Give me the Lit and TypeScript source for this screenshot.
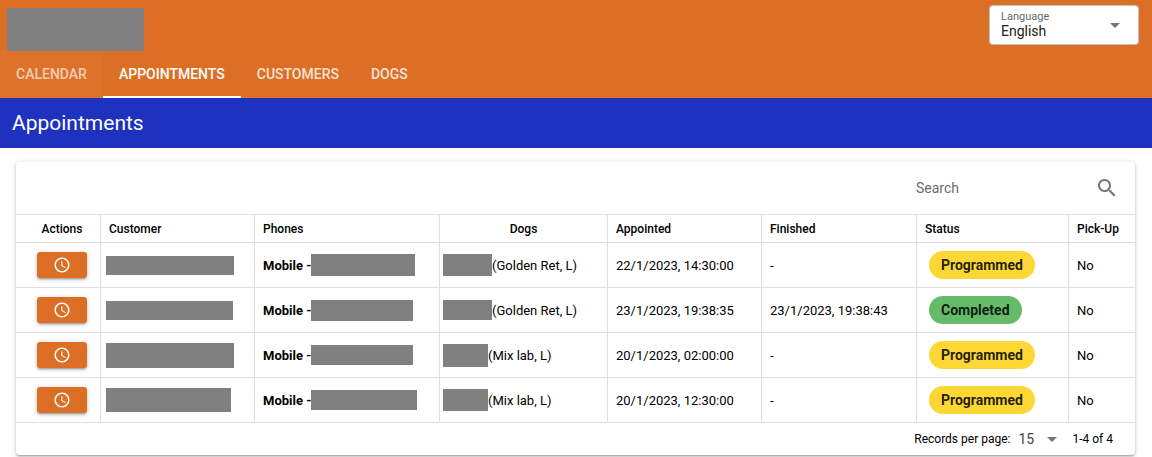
import { LitElement, html, css, svg } from "lit";
import { customElement, state } from "lit/decorators.js";
import { classMap } from "lit/directives/class-map.js";
import { styleMap } from "lit/directives/style-map.js";

interface Mask {
  w: number;
  h: number;
}

interface Appointment {
  customer: Mask;
  phone: Mask;
  dog: Mask;
  breed: string;
  appointed: string;
  finished: string;
  status: "Programmed" | "Completed";
  pickUp: string;
}

const appointments: Appointment[] = [
  {
    customer: { w: 128, h: 19 },
    phone: { w: 104, h: 22 },
    dog: { w: 49, h: 22 },
    breed: "(Golden Ret, L)",
    appointed: "22/1/2023, 14:30:00",
    finished: "-",
    status: "Programmed",
    pickUp: "No",
  },
  {
    customer: { w: 127, h: 19 },
    phone: { w: 102, h: 21 },
    dog: { w: 49, h: 20 },
    breed: "(Golden Ret, L)",
    appointed: "23/1/2023, 19:38:35",
    finished: "23/1/2023, 19:38:43",
    status: "Completed",
    pickUp: "No",
  },
  {
    customer: { w: 128, h: 25 },
    phone: { w: 102, h: 20 },
    dog: { w: 45, h: 23 },
    breed: "(Mix lab, L)",
    appointed: "20/1/2023, 02:00:00",
    finished: "-",
    status: "Programmed",
    pickUp: "No",
  },
  {
    customer: { w: 125, h: 24 },
    phone: { w: 106, h: 20 },
    dog: { w: 45, h: 22 },
    breed: "(Mix lab, L)",
    appointed: "20/1/2023, 12:30:00",
    finished: "-",
    status: "Programmed",
    pickUp: "No",
  },
];

const tabs = ["Calendar", "Appointments", "Customers", "Dogs"];

const mask = (m: Mask) =>
  html`<span class="mask" style=${styleMap({ width: `${m.w}px`, height: `${m.h}px` })}></span>`;

const icon = (name: string, d: string) =>
  html`<svg class="icon ${name}" viewBox="0 0 24 24" aria-hidden="true">${svg`<path d=${d}></path>`}</svg>`;

const arrow = "M7 10l5 5 5-5z";
const clock =
  "M11.99 2C6.47 2 2 6.48 2 12s4.47 10 9.99 10C17.52 22 22 17.52 22 12S17.52 2 11.99 2zM12 20c-4.42 0-8-3.58-8-8s3.58-8 8-8 8 3.58 8 8-3.58 8-8 8zm.5-13H11v6l5.25 3.15.75-1.23-4.5-2.67z";
const magnifier =
  "M15.5 14h-.79l-.28-.27C15.41 12.59 16 11.11 16 9.5 16 5.91 13.09 3 9.5 3S3 5.91 3 9.5 5.91 16 9.5 16c1.61 0 3.09-.59 4.23-1.57l.27.28v.79l5 4.99L20.49 19l-4.99-5zm-6 0C7.01 14 5 11.99 5 9.5S7.01 5 9.5 5 14 7.01 14 9.5 11.99 14 9.5 14z";

@customElement("app-root")
export class AppRoot extends LitElement {
  static styles = css`
    :host {
      display: block;
      font-family: Roboto, "Liberation Sans", sans-serif;
      font-size: 14px;
      color: #000;
      background: #fff;
    }
    * {
      box-sizing: border-box;
    }
    .header {
      background: #dd6e25;
    }
    .toolbar {
      display: flex;
      justify-content: space-between;
      align-items: flex-start;
      padding: 5px 13px 0 7px;
    }
    .brand {
      width: 137px;
      height: 43px;
      margin-top: 3px;
      background: #808080;
    }
    .language {
      display: grid;
      width: 150px;
      height: 40px;
      background: #fff;
      border: 1px solid #c2c2c2;
      border-radius: 4px;
    }
    .language > * {
      grid-area: 1 / 1;
    }
    .language-label {
      padding: 4px 11px;
      font-size: 11px;
      line-height: 14px;
      color: #666;
    }
    .language .icon {
      place-self: center end;
      margin-right: 11px;
      pointer-events: none;
    }
    select {
      appearance: none;
      margin: 0;
      border: 0;
      outline: 0;
      background: transparent;
      font: inherit;
      color: #212121;
    }
    .language-select {
      width: 100%;
      padding: 14px 11px 2px;
    }
    .tabs {
      display: flex;
    }
    .tab {
      height: 47px;
      padding: 0 16px;
      border: 0;
      border-bottom: 2px solid transparent;
      background: transparent;
      color: rgba(255, 255, 255, 0.82);
      font: 500 14px/24px Roboto, "Liberation Sans", sans-serif;
      text-transform: uppercase;
    }
    .tab.faded {
      background: #de722b;
      color: rgba(255, 255, 255, 0.66);
    }
    .tab.active {
      color: #fff;
      border-bottom-color: #fff;
    }
    .title {
      margin: 0;
      padding: 1px 12px;
      background: #1e32bf;
      color: #fff;
      font-size: 21px;
      font-weight: 400;
      line-height: 48px;
    }
    .content {
      padding: 14px 17px 2px 16px;
    }
    .card {
      border-radius: 4px;
      background: #fff;
      box-shadow:
        0 1px 5px rgba(0, 0, 0, 0.2),
        0 2px 2px rgba(0, 0, 0, 0.14),
        0 3px 1px -2px rgba(0, 0, 0, 0.12);
    }
    .search-bar {
      display: flex;
      justify-content: flex-end;
      align-items: center;
      height: 52px;
      padding: 0 16px;
    }
    .search {
      width: 179px;
      height: 24px;
      padding: 0;
      border: 0;
      outline: 0;
      background: transparent;
      font: inherit;
      color: #212121;
    }
    .search::placeholder {
      color: #6b6b6b;
      opacity: 1;
    }
    .icon {
      display: block;
      width: 24px;
      height: 24px;
      flex: none;
      fill: #757575;
    }
    table {
      width: 100%;
      table-layout: fixed;
      border-collapse: separate;
      border-spacing: 0;
      border-top: 1px solid #dedede;
    }
    .c-actions { width: 84px; }
    .c-customer { width: 154px; }
    .c-phones { width: 185px; }
    .c-dogs { width: 168px; }
    .c-appointed { width: 154px; }
    .c-finished { width: 155px; }
    .c-status { width: 152px; }
    .c-pickup { width: 67px; }
    th,
    td {
      padding: 0 8px;
      border-bottom: 1px solid #dedede;
      border-left: 1px solid #dedede;
      text-align: left;
      white-space: nowrap;
    }
    th {
      height: 28px;
      font-size: 12px;
      font-weight: 500;
    }
    td {
      height: 45px;
      font-size: 13px;
    }
    th:first-child,
    td:first-child {
      padding-left: 16px;
      border-left: 0;
      text-align: center;
    }
    th.center {
      text-align: center;
    }
    td.customer {
      padding-left: 5px;
    }
    td.dog {
      padding-left: 3px;
    }
    .line {
      display: flex;
      align-items: center;
    }
    .mask {
      display: block;
      flex: none;
      background: #808080;
    }
    .action {
      display: inline-flex;
      justify-content: center;
      align-items: center;
      width: 50px;
      height: 26px;
      padding: 0;
      border: 0;
      border-radius: 3px;
      background: #dd6e25;
      vertical-align: middle;
      box-shadow:
        0 1px 5px rgba(0, 0, 0, 0.2),
        0 2px 2px rgba(0, 0, 0, 0.14),
        0 3px 1px -2px rgba(0, 0, 0, 0.12);
    }
    .clock {
      width: 18px;
      height: 18px;
      fill: #fff;
    }
    .chip {
      display: inline-block;
      margin-left: 4px;
      padding: 0 12px;
      border-radius: 14px;
      background: #fdd835;
      color: rgba(0, 0, 0, 0.87);
      font-size: 14px;
      font-weight: 700;
      line-height: 28px;
      vertical-align: middle;
    }
    .chip.completed {
      background: #66bb6a;
    }
    .footer {
      display: flex;
      justify-content: flex-end;
      align-items: center;
      height: 32px;
      padding: 0 22px;
      font-size: 12px;
    }
    .pager {
      display: grid;
      width: 46px;
      margin: 0 8px;
    }
    .pager > * {
      grid-area: 1 / 1;
    }
    .pager .icon {
      place-self: center end;
      pointer-events: none;
    }
    .pager-select {
      padding: 0;
      font-size: 14px;
      color: #424242;
    }
  `;

  @state() private active = "Appointments";

  render() {
    return html`
      <header class="header">
        <div class="toolbar">
          <div class="brand"></div>
          <div class="language">
            <label class="language-label" for="language">Language</label>
            <select class="language-select" id="language">
              <option>English</option>
            </select>
            ${icon("arrow", arrow)}
          </div>
        </div>
        <nav class="tabs" role="tablist">
          ${tabs.map(
            (name) => html`<button
              role="tab"
              aria-selected=${name === this.active}
              class=${classMap({
                tab: true,
                active: name === this.active,
                faded: name === "Calendar" && name !== this.active,
              })}
              @click=${() => (this.active = name)}
            >${name}</button>`
          )}
        </nav>
      </header>
      <h1 class="title">Appointments</h1>
      <main class="content">
        <section class="card">
          <div class="search-bar">
            <input class="search" type="text" placeholder="Search" aria-label="Search" />
            ${icon("magnifier", magnifier)}
          </div>
          <table>
            <colgroup>
              <col class="c-actions" />
              <col class="c-customer" />
              <col class="c-phones" />
              <col class="c-dogs" />
              <col class="c-appointed" />
              <col class="c-finished" />
              <col class="c-status" />
              <col class="c-pickup" />
            </colgroup>
            <thead>
              <tr>
                <th>Actions</th>
                <th>Customer</th>
                <th>Phones</th>
                <th class="center">Dogs</th>
                <th>Appointed</th>
                <th>Finished</th>
                <th>Status</th>
                <th>Pick-Up</th>
              </tr>
            </thead>
            <tbody>
              ${appointments.map(
                (a) => html`<tr>
                  <td><button class="action" aria-label="Reschedule">${icon("clock", clock)}</button></td>
                  <td class="customer">${mask(a.customer)}</td>
                  <td><div class="line"><b>Mobile -</b>${mask(a.phone)}</div></td>
                  <td class="dog"><div class="line">${mask(a.dog)}<span>${a.breed}</span></div></td>
                  <td>${a.appointed}</td>
                  <td>${a.finished}</td>
                  <td>
                    <span class=${classMap({ chip: true, completed: a.status === "Completed" })}>${a.status}</span>
                  </td>
                  <td>${a.pickUp}</td>
                </tr>`
              )}
            </tbody>
          </table>
          <footer class="footer">
            <label for="rows">Records per page:</label>
            <div class="pager">
              <select class="pager-select" id="rows">
                <option>15</option>
              </select>
              ${icon("arrow", arrow)}
            </div>
            <span>1-4 of 4</span>
          </footer>
        </section>
      </main>
    `;
  }
}
